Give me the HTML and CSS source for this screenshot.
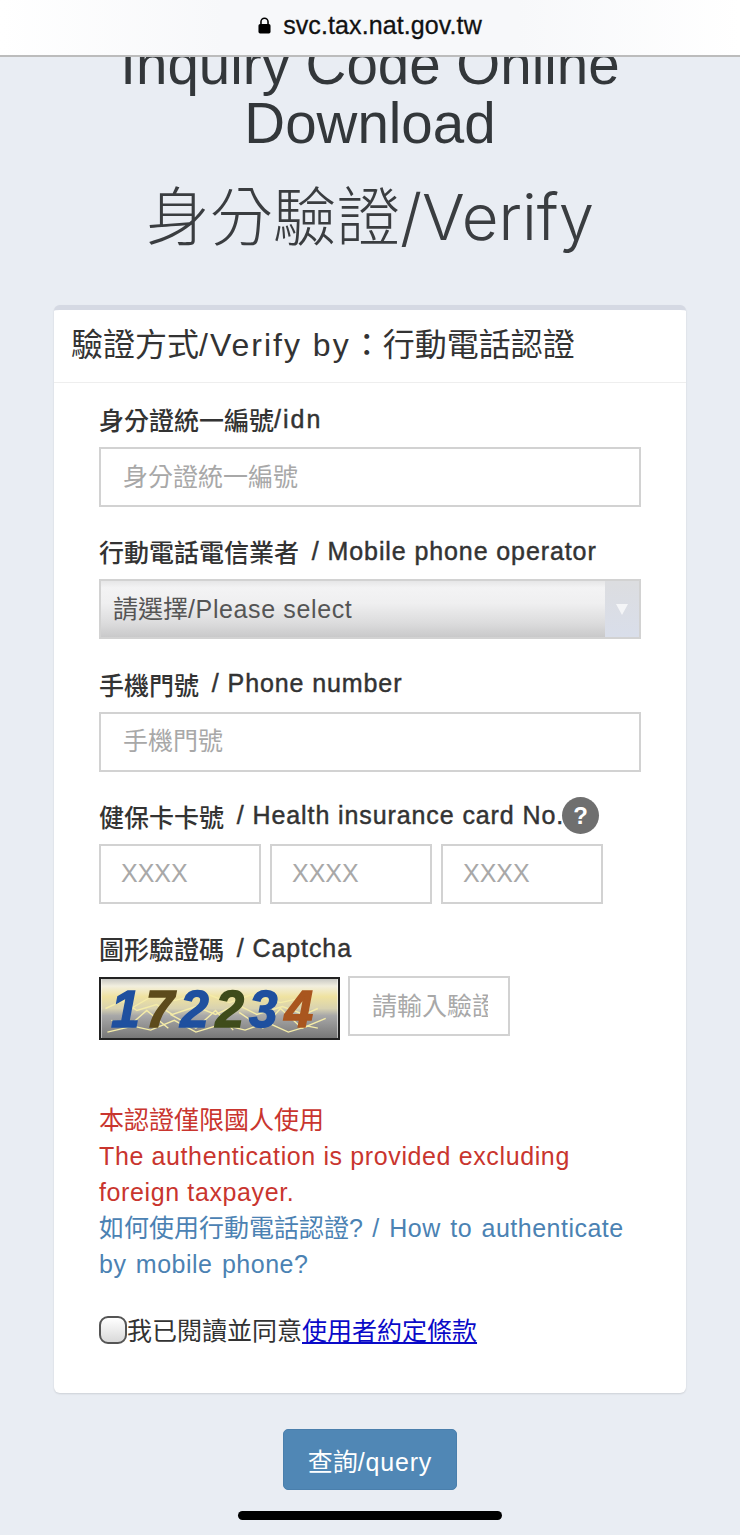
FILE: index.html
```html
<!DOCTYPE html>
<html lang="zh-Hant">
<head>
<meta charset="utf-8">
<title>身分驗證/Verify</title>
<link rel="stylesheet" href="styles.css">
</head>
<body>
<header class="urlbar">
  <svg class="lock" viewBox="0 0 14 18" width="13" height="17" aria-hidden="true"><path d="M3.2 8V5a3.8 3.8 0 0 1 7.6 0v3" fill="none" stroke="#000" stroke-width="1.7"/><rect x="0.5" y="7.5" width="13" height="10" rx="1.8" fill="#000"/></svg>
  <span class="url">svc.tax.nat.gov.tw</span>
</header>
<main class="page">
  <h1 class="title">Inquiry Code Online Download</h1>
  <h2 class="subtitle">身分驗證/Verify</h2>
  <section class="card">
    <h3 class="card-title">驗證方式<span class="en-title">/Verify by</span>：行動電話認證</h3>
    <form class="card-body">
      <div class="group">
        <label class="label">身分證統一編號<span class="en-label en-tight">/idn</span></label>
        <input class="field" type="text" placeholder="身分證統一編號">
      </div>
      <div class="group">
        <label class="label">行動電話電信業者<span class="en-label"> / Mobile phone operator</span></label>
        <div class="select"><span class="select-text">請選擇<span class="en">/Please select</span></span><span class="select-arrow"><i class="triangle"></i></span></div>
      </div>
      <div class="group">
        <label class="label">手機門號<span class="en-label"> / Phone number</span></label>
        <input class="field" type="text" placeholder="手機門號">
      </div>
      <div class="group">
        <label class="label">健保卡卡號<span class="en-label"> / Health insurance card No.</span><span class="help">?</span></label>
        <div class="triple">
          <input class="field small" type="text" placeholder="XXXX">
          <input class="field small" type="text" placeholder="XXXX">
          <input class="field small" type="text" placeholder="XXXX">
        </div>
      </div>
      <div class="group captcha-group">
        <label class="label">圖形驗證碼<span class="en-label"> / Captcha</span></label>
        <div class="captcha-row">
          <svg class="captcha" viewBox="0 0 240 60" width="240" height="60" role="img" aria-label="172234">
            <defs><linearGradient id="cg" x1="0" y1="0" x2="0" y2="1"><stop offset="0" stop-color="#c9c9c4"/><stop offset=".12" stop-color="#f2efdf"/><stop offset=".3" stop-color="#efe2a0"/><stop offset=".5" stop-color="#d8d2b0"/><stop offset=".62" stop-color="#a8a8a8"/><stop offset="1" stop-color="#777"/></linearGradient></defs>
            <rect width="240" height="60" fill="url(#cg)"/>
            <g fill="none" stroke="#f5eca8" stroke-width="1.4">
              <path d="M4 30l18-8 14 10 20-6 16 10 24-8 20 8 22-10 20 10 26-8 22 8 14-6"/>
              <path d="M6 54l26-6 18 4 24-10 22 12 26-8 24 6 22-8 22 10 20-6 10 2"/>
              <path d="M10 42l20 4 16-14 22 18M70 36l26 14 20-18 18 20M140 34l24 16 18-20 22 20 24-10"/>
              <path d="M16 18l14 12 24-14 20 6 30-8 26 10 22-8 30 8 28-6"/>
            </g>
            <text class="captcha-text" y="49" x="10 45 80 116 150 186"><tspan class="d1">1</tspan><tspan class="d7">7</tspan><tspan class="d1">2</tspan><tspan class="d2">2</tspan><tspan class="d1">3</tspan><tspan class="d4">4</tspan></text>
          </svg>
          <input class="field small" type="text" placeholder="請輸入驗證碼">
        </div>
      </div>
      <p class="note warn">本認證僅限國人使用<br><span class="en">The authentication is provided excluding foreign taxpayer.</span></p>
      <p class="note"><a class="howto" href="#">如何使用行動電話認證?<span class="en-link"> / How to authenticate by mobile phone?</span></a></p>
      <div class="agree"><input class="check" type="checkbox"><span>我已閱讀並同意<a class="terms" href="#">使用者約定條款</a></span></div>
    </form>
  </section>
  <div class="actions"><button class="submit" type="button">查詢<span class="en-btn">/query</span></button></div>
</main>
<div class="homebar"></div>
</body>
</html>
```

FILE: styles.css
```css
* { box-sizing: border-box; }
html, body { margin: 0; height: 1535px; overflow: hidden; }
body {
  background: #e9edf3;
  color: #333;
  font-family: "Liberation Sans", "Noto Sans CJK TC", sans-serif;
  font-size: 25px;
}
.en { letter-spacing: 0.62px; }
.en-link { letter-spacing: 0.5px; word-spacing: 2px; }
.en-label { padding-left: 5px; letter-spacing: 0.9px; -webkit-text-stroke: 0.45px #333; white-space: pre; }
.en-tight { padding-left: 0; letter-spacing: 2px; }
.en-title { letter-spacing: 2px; }
.en-btn { letter-spacing: 0.8px; }
.urlbar {
  position: absolute;
  top: 0; left: 0; right: 0;
  height: 57px;
  display: flex;
  align-items: center;
  justify-content: center;
  gap: 12px;
  padding-bottom: 4px;
  background: linear-gradient(90deg, #fff 0%, #f7f8fa 30%, #f7f8fa 70%, #fff 100%);
  border-bottom: 2px solid #bcbcbc;
  z-index: 2;
}
.url { font-size: 25px; color: #111; letter-spacing: 0.1px; -webkit-text-stroke: 0.3px #111; }
.lock { display: block; }
.page { padding-top: 35px; }
.title {
  margin: 0;
  font-size: 56.5px;
  font-weight: 400;
  line-height: 59px;
  text-align: center;
  color: #33373a;
}
.subtitle {
  margin: 28px 0 0;
  font-family: Inter, "Noto Sans CJK TC", sans-serif;
  font-size: 63.5px;
  font-weight: 300;
  line-height: 72px;
  text-align: center;
  color: #3a3d40;
}
.card {
  margin: 52px 54px 0;
  height: 1088px;
  background: #fff;
  border-top: 5px solid #d5d9e3;
  border-radius: 6px;
  box-shadow: 0 1px 2px rgba(0,0,0,.12);
}
.card-title {
  margin: 0;
  height: 73px;
  padding-left: 17px;
  font-size: 32px;
  font-weight: 400;
  line-height: 70px;
  color: #333;
  border-bottom: 1px solid #eee;
}
.card-body { padding: 18px 45px 0; }
.group { height: 132.3px; }
.label {
  display: flex;
  align-items: center;
  height: 36px;
  margin-bottom: 10px;
  font-weight: 500;
  font-size: 25px;
  color: #333;
  white-space: nowrap;
}
.help {
  display: flex;
  align-items: center;
  justify-content: center;
  flex: none;
  width: 37px;
  height: 37px;
  margin-left: -2px;
  border-radius: 50%;
  background: #6f6f6f;
  color: #fff;
  font-size: 24px;
  font-weight: 700;
}
.field {
  display: block;
  width: 100%;
  height: 60px;
  padding: 0 22px;
  border: 2px solid #d2d2d2;
  background: #fff;
  font: inherit;
  color: #333;
  border-radius: 0;
  outline: none;
}
.field::placeholder { color: #a8a8a8; opacity: 1; }
.select {
  display: flex;
  height: 60px;
  border: 2px solid #d2d2d2;
  background: linear-gradient(180deg, #e6e6e7 0%, #f3f3f4 12%, #efeff0 40%, #dcdcdd 75%, #c9c9ca 100%);
}
.select-text { flex: 1; padding-left: 12px; line-height: 56px; color: #555; }
.select-arrow {
  width: 34px;
  display: flex;
  align-items: center;
  justify-content: center;
  background: linear-gradient(180deg, #dcdde0, #d9deea);
}
.triangle {
  width: 0; height: 0;
  border-left: 6px solid transparent;
  border-right: 6px solid transparent;
  border-top: 11px solid #f4f5f7;
}
.triple { display: flex; gap: 9px; }
.small { width: 162px; flex: none; }
.triple .small { padding: 0 20px; }
.captcha-row { display: flex; gap: 8px; align-items: flex-start; }
.captcha {
  width: 241px;
  height: 63px;
  border: 2px solid #222;
  margin-top: 1px;
  flex: none;
}
.captcha-text { font: italic 700 52px "Liberation Sans", sans-serif; stroke-width: 1.6px; }
.d1 { fill: #1f509f; stroke: #1f509f; }
.d7 { fill: #5d4b1c; stroke: #5d4b1c; }
.d2 { fill: #3f4c1b; stroke: #3f4c1b; }
.d4 { fill: #a9561f; stroke: #a9561f; }
.captcha-row .small { padding-right: 20px; }
.captcha-group { height: 172px; }
.note { margin: 0; line-height: 36px; }
.warn { color: #c9352e; }
.howto { color: #4b82b3; text-decoration: none; }
.agree {
  display: flex;
  align-items: center;
  margin-top: 31px;
  line-height: 36px;
  color: #333;
}
.check {
  appearance: none;
  -webkit-appearance: none;
  flex: none;
  width: 28px;
  height: 28px;
  margin: -3px 0 0;
  border: 2px solid #555;
  border-radius: 9px;
  background: linear-gradient(180deg, #fff, #d9d9d9);
}
.terms { color: #0a0ac8; text-decoration: underline; }
.actions { display: flex; justify-content: center; margin-top: 36px; }
.submit {
  width: 174px;
  height: 61px;
  background: #5087b5;
  color: #fff;
  border: 1px solid #4a7fac;
  border-radius: 5px;
  font: inherit;
}
.homebar {
  position: absolute;
  left: 238px;
  top: 1511px;
  width: 264px;
  height: 9px;
  border-radius: 5px;
  background: #000;
}
```
